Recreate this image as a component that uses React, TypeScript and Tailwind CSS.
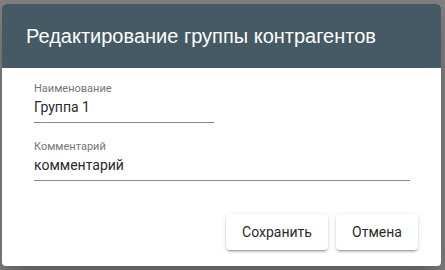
import React from "react";

export default function App() {
  return (
    <div className="w-[445px] h-[270px] bg-[#7f7f7f] pt-[4px] pl-[2px] overflow-hidden" style={{ fontFamily: "Roboto, 'Liberation Sans', Arial, sans-serif" }}>
      <div className="w-[439px] h-[262px] bg-white rounded-[4px] overflow-hidden flex flex-col shadow-[0_11px_15px_-7px_rgba(0,0,0,0.2),0_24px_38px_3px_rgba(0,0,0,0.14)]">
        <div className="h-[64px] bg-[#455a64] flex items-center pl-[24px]">
          <span className="text-white text-[20px] leading-none" style={{ fontFamily: "'Liberation Sans', Arial, sans-serif" }}>
            Редактирование группы контрагентов
          </span>
        </div>
        <div className="flex flex-col pl-[32px] pt-[14px]">
          <div className="w-[180px] flex flex-col">
            <span className="text-[11px] text-[#757575] leading-[14px]">Наименование</span>
            <span className="text-[14px] text-[#2a2a2a] leading-[18px] mt-[2px] pb-[6px] border-b border-[#8a8a8a]">Группа 1</span>
          </div>
          <div className="w-[376px] flex flex-col mt-[17px]">
            <span className="text-[11px] text-[#757575] leading-[14px]">Комментарий</span>
            <span className="text-[14px] text-[#2a2a2a] leading-[18px] mt-[2px] pb-[6px] border-b border-[#8a8a8a]">комментарий</span>
          </div>
        </div>
        <div className="flex justify-end gap-[8px] pr-[23px] mt-auto mb-[16px]">
          <button className="h-[36px] px-[16px] w-[102px] bg-white rounded-[4px] text-[14px] text-[#2a2a2a] shadow-[0_3px_1px_-2px_rgba(0,0,0,0.2),0_2px_2px_0_rgba(0,0,0,0.14),0_1px_5px_0_rgba(0,0,0,0.12)]">
            Сохранить
          </button>
          <button className="h-[36px] px-[16px] w-[82px] bg-white rounded-[4px] text-[14px] text-[#2a2a2a] shadow-[0_3px_1px_-2px_rgba(0,0,0,0.2),0_2px_2px_0_rgba(0,0,0,0.14),0_1px_5px_0_rgba(0,0,0,0.12)]">
            Отмена
          </button>
        </div>
      </div>
    </div>
  );
}
